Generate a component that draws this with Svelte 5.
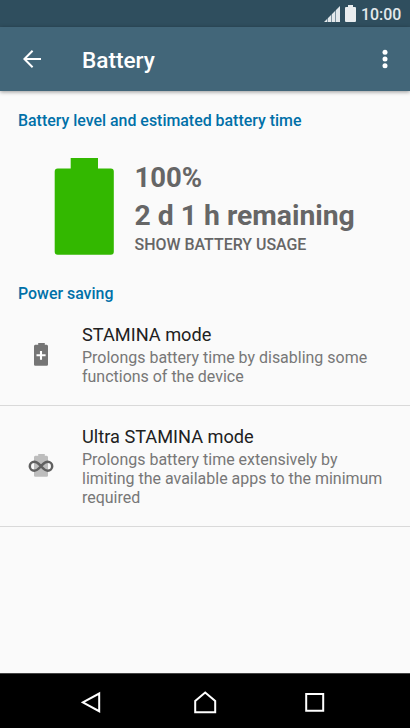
<script>
  const modes = [
    {
      name: 'STAMINA mode',
      icon: 'plus',
      lines: ['Prolongs battery time by disabling some', 'functions of the device']
    },
    {
      name: 'Ultra STAMINA mode',
      icon: 'infinity',
      lines: ['Prolongs battery time extensively by', 'limiting the available apps to the minimum', 'required']
    }
  ];
</script>

<div class="screen">
  <div class="status">
    <svg class="signal" width="17" height="16" viewBox="0 0 17 16">
      <path d="M0 16L3 13V16ZM4 12L7 9V16H4ZM8 8L11 5V16H8ZM12 4L16 0V16H12Z" fill="#e3e8eb" />
      <path d="M3 13L4 12V16H3ZM7 9L8 8V16H7ZM11 5L12 4V16H11Z" fill="#7d929f" />
    </svg>
    <svg class="cell" width="11" height="17" viewBox="0 0 11 17">
      <path d="M3 0H8V2H10Q11 2 11 3V16Q11 17 10 17H1Q0 17 0 16V3Q0 2 1 2H3Z" fill="#e9edef" />
    </svg>
    <span class="clock">10:00</span>
  </div>

  <header>
    <svg class="back" width="18" height="18" viewBox="0 0 18 18" fill="none" stroke="#fff" stroke-width="2">
      <path d="M18 9H2M9.6 .8L1.4 9L9.6 17.2" />
    </svg>
    <h1>Battery</h1>
    <svg class="more" width="6" height="20" viewBox="0 0 6 20" fill="#fff">
      <circle cx="3" cy="3.2" r="2.5" /><circle cx="3" cy="10" r="2.5" /><circle cx="3" cy="16.8" r="2.5" />
    </svg>
  </header>

  <main>
    <h2 class="level">Battery level and estimated battery time</h2>
    <section class="summary">
      <svg width="60" height="97" viewBox="0 0 60 97">
        <path d="M16.7 0H44V10.5H56.8Q59.8 10.5 59.8 13.5V93.7Q59.8 96.7 56.8 96.7H3.7Q.7 96.7 .7 93.7V13.5Q.7 10.5 3.7 10.5H16.7Z" fill="#33b800" />
      </svg>
      <div class="figures">
        <div class="big percent">100%</div>
        <div class="big">2 d 1 h remaining</div>
        <div class="usage">SHOW BATTERY USAGE</div>
      </div>
    </section>
    <h2 class="saving">Power saving</h2>
    {#each modes as mode}
      <section class="mode">
        <div class="glyph">
          {#if mode.icon === 'plus'}
            <svg width="26" height="24" viewBox="0 0 26 24">
              <path d="M10.2 .9H16.8V2.8H18.8Q20 3 20 4.2V22.4Q20 23.7 18.7 23.7H7.3Q6 23.7 6 22.4V4.2Q6 3 7.2 2.8H10.2Z" fill="#757575" />
              <path d="M13 9V17.7M8.5 13.3H17.6" stroke="#fff" stroke-width="2.1" />
            </svg>
          {:else}
            <svg width="26" height="24" viewBox="0 0 26 24">
              <path d="M10.2 .9H16.8V2.8H18.8Q20 3 20 4.2V22.4Q20 23.7 18.7 23.7H7.3Q6 23.7 6 22.4V4.2Q6 3 7.2 2.8H10.2Z" fill="#bdbdbd" />
              <path d="M13 13.2C10.8 10.8 9.3 8.7 6.3 8.7A4.5 4.5 0 0 0 6.3 17.7C9.3 17.7 10.8 15.6 13 13.2C15.2 10.8 16.7 8.7 19.7 8.7A4.5 4.5 0 0 1 19.7 17.7C16.7 17.7 15.2 15.6 13 13.2Z" fill="none" stroke="#606060" stroke-width="2.5" />
            </svg>
          {/if}
        </div>
        <div class="copy">
          <h3>{mode.name}</h3>
          {#each mode.lines as line}<p>{line}</p>{/each}
        </div>
      </section>
    {/each}
  </main>

  <nav>
    <svg width="20" height="22" viewBox="0 0 20 22" fill="none" stroke="#fff" stroke-width="2">
      <path d="M18.2 2.5V20.2L1.8 11.3Z" />
    </svg>
    <svg width="24" height="24" viewBox="0 0 24 24" fill="none" stroke="#fff" stroke-width="2">
      <path d="M2.2 21.2V10L12.2 1.6L22.2 10V21.2Z" />
    </svg>
    <svg width="20" height="20" viewBox="0 0 20 20" fill="none" stroke="#fff" stroke-width="2">
      <path d="M1.2 1H18.2V17.8H1.2Z" />
    </svg>
  </nav>
</div>

<style>
  :global(body) { margin: 0; }
  .screen {
    width: 410px;
    height: 728px;
    display: flex;
    flex-direction: column;
    overflow: hidden;
    background: #fafafa;
    font-family: Roboto, "Liberation Sans", sans-serif;
  }
  h1, h2, h3, p { margin: 0; white-space: nowrap; }
  svg { display: block; flex: none; }
  .status {
    height: 27px;
    flex: none;
    display: flex;
    background: #2f4e5e;
    color: #e3e8eb;
  }
  .signal { margin: 6px 0 0 324px; }
  .cell { margin: 5px 0 0 4px; }
  .clock { margin: 4px 0 0 5px; font-size: 15.9px; line-height: 22px; font-weight: 500; }
  header {
    height: 64px;
    flex: none;
    display: flex;
    background: #426679;
    box-shadow: 0 1px 4px rgba(0, 0, 0, .4);
  }
  .back { margin: 23px 0 0 23px; }
  h1 { width: 300px; margin: 20px 0 0 41px; color: #fff; font-size: 22.6px; line-height: 28px; font-weight: 500; }
  .more { margin-top: 22px; }
  main { flex: 1; }
  h2 { padding-left: 18px; color: #0070a8; font-size: 15.92px; line-height: 20px; font-weight: 500; }
  .level { padding-top: 20px; }
  .summary { display: flex; height: 97px; padding: 27px 0 0 54px; }
  .figures { margin: 1px 0 0 20.5px; color: #666; white-space: nowrap; }
  .big { font-size: 28.3px; line-height: 38px; font-weight: 700; }
  .percent { font-size: 27.5px; }
  .usage { font-size: 15.95px; line-height: 20px; font-weight: 500; }
  .saving { padding-top: 29px; }
  .mode { display: flex; align-items: center; box-sizing: border-box; height: 102px; border-bottom: 1px solid #d9d9d9; }
  .mode:last-child { height: 121px; }
  .glyph { width: 54px; padding-left: 28px; margin-top: -2px; }
  .copy { padding-top: 1px; color: #777; }
  h3 { margin-bottom: 2px; color: #212121; font-size: 18.2px; line-height: 24px; font-weight: 400; }
  p { font-size: 15.97px; line-height: 18.7px; }
  nav { height: 55px; flex: none; display: flex; background: #000; box-sizing: border-box; border-top: 1px solid #444; }
  nav svg:nth-child(1) { margin: 17px 0 0 81px; }
  nav svg:nth-child(2) { margin: 17px 0 0 92px; }
  nav svg:nth-child(3) { margin: 19px 0 0 88px; }
</style>
